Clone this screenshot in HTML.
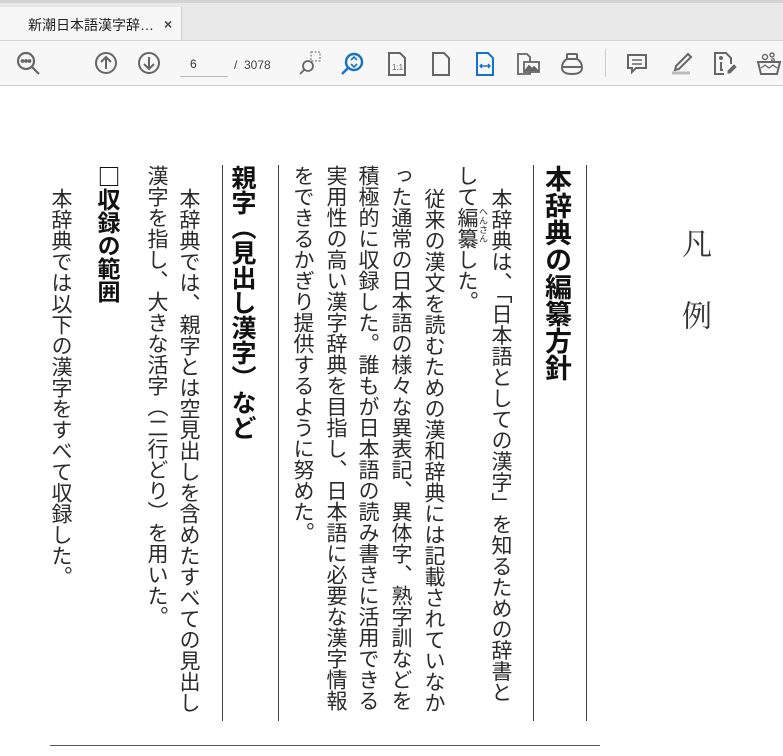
<!DOCTYPE html>
<html><head><meta charset="utf-8"><style>
*{margin:0;padding:0;box-sizing:border-box}
body{width:783px;height:756px;overflow:hidden;background:#fff;position:relative;font-family:"Liberation Sans","Noto Sans CJK JP",sans-serif}
.tabbar{position:absolute;left:0;top:0;width:783px;height:40px;background:#e8e8e8;border-top:3px solid #d4d4d4}
.tab{position:absolute;left:0;top:4px;width:182px;height:36px;background:#f6f6f6;border-right:1px solid #cfcfcf;font-size:14px;color:#222;padding:8px 0 0 28px;white-space:nowrap}
.tab .x{position:absolute;left:164px;top:9px;font-size:14px;color:#444;font-weight:bold}
.tool{position:absolute;left:0;top:40px;width:783px;height:46px;background:#f7f7f7;border-top:1px solid #d6d6d6;border-bottom:1px solid #cfcfcf}
.ic{position:absolute;top:10px}
.pg{position:absolute;left:180px;top:16px;width:48px;height:20px;border-bottom:1px solid #bbb;font-size:12px;color:#333;padding-left:10px}
.tot{position:absolute;left:234px;top:17px;font-size:12px;color:#444}
.sep{position:absolute;left:605px;top:8px;width:1px;height:28px;background:#ccc}
.col{position:absolute;top:165px;writing-mode:vertical-rl;font-family:"Noto Sans CJK JP",sans-serif;font-size:21px;line-height:22px;color:#2a2a2a;white-space:nowrap;font-weight:400}
.h{font-weight:700;color:#111}
.vl{position:absolute;top:165px;width:1px;height:556px;background:#444}
</style></head><body>
<div class="tabbar"><div class="tab">新潮日本語漢字辞…<span class="x">×</span></div></div>
<div class="tool">
<svg class="ic" style="left:16px" width="26" height="26" viewBox="0 0 26 26" fill="none" stroke="#666" stroke-width="2.2"><circle cx="10" cy="10" r="8"/><path d="M16 16l7 7"/><circle cx="6.5" cy="10" r=".8" fill="#666"/><circle cx="10" cy="10" r=".8" fill="#666"/><circle cx="13.5" cy="10" r=".8" fill="#666"/></svg>
<svg class="ic" style="left:94px" width="24" height="24" viewBox="0 0 24 24" fill="none" stroke="#666" stroke-width="2"><circle cx="12" cy="12" r="10"/><path d="M12 18V6M7 11l5-5 5 5"/></svg>
<svg class="ic" style="left:137px" width="24" height="24" viewBox="0 0 24 24" fill="none" stroke="#666" stroke-width="2"><circle cx="12" cy="12" r="10"/><path d="M12 6v12M7 13l5 5 5-5"/></svg>
<div class="pg">6</div><div class="tot">/ &nbsp;3078</div>
<svg class="ic" style="left:297px" width="26" height="26" viewBox="0 0 26 26" fill="none" stroke="#666" stroke-width="1.8"><rect x="14" y="1" width="9" height="9" stroke-dasharray="2 1.5" stroke-width="1"/><circle cx="11" cy="15" r="5"/><path d="M7 19l-4 4"/></svg>
<svg class="ic" style="left:340px" width="26" height="26" viewBox="0 0 26 26" fill="none" stroke="#1473c8" stroke-width="2.4"><circle cx="14" cy="11" r="8"/><path d="M8 17l-6 6"/><path d="M11 9l3-3 3 3M11 13l3 3 3-3" stroke-width="1.6"/></svg>
<svg class="ic" style="left:386px" width="22" height="26" viewBox="0 0 22 26" fill="none" stroke="#666" stroke-width="2"><path d="M3 2h11l5 5v17H3z"/><text x="6" y="19" font-size="8" fill="#666" stroke="none" font-family="Liberation Sans">1:1</text></svg>
<svg class="ic" style="left:430px" width="22" height="26" viewBox="0 0 22 26" fill="none" stroke="#666" stroke-width="2"><path d="M3 2h11l5 5v17H3z"/></svg>
<svg class="ic" style="left:474px" width="22" height="26" viewBox="0 0 22 26" fill="none" stroke="#1473c8" stroke-width="2"><path d="M3 2h11l5 5v17H3z"/><path d="M6 15h10M8 13l-2 2 2 2M14 13l2 2-2 2" stroke-width="1.4"/></svg>
<svg class="ic" style="left:515px" width="26" height="26" viewBox="0 0 26 26" fill="none" stroke="#666" stroke-width="1.8"><path d="M3 3h9l3 3v17H3z"/><rect x="9" y="11" width="15" height="10" fill="#f7f7f7"/><path d="M10 20l4-5 3 3 2-2 4 4" fill="#666"/></svg>
<svg class="ic" style="left:560px" width="24" height="26" viewBox="0 0 24 26" fill="none" stroke="#666" stroke-width="2"><rect x="7" y="3" width="10" height="5" rx="1"/><path d="M7 8c-4 2-5 6-5 9 0 4 4 6 10 6s10-2 10-6c0-3-1-7-5-9"/><path d="M3 16h18"/></svg>
<div class="sep"></div>
<svg class="ic" style="left:625px" width="24" height="26" viewBox="0 0 24 26" fill="none" stroke="#666" stroke-width="2"><path d="M3 4h18v13H11l-4 4v-4H3z"/><path d="M7 9h10M7 13h10" stroke-width="1.5"/></svg>
<svg class="ic" style="left:668px" width="26" height="26" viewBox="0 0 26 26" fill="none" stroke="#666" stroke-width="2"><path d="M20 3l3 3-12 12-4 1 1-4z"/><path d="M4 22h18" stroke="#bbb" stroke-width="3"/></svg>
<svg class="ic" style="left:712px" width="26" height="26" viewBox="0 0 26 26" fill="none" stroke="#666" stroke-width="2"><path d="M12 23H3V2h11l5 5v6"/><path d="M9 11v8M8 19h3" stroke-width="2"/><circle cx="9" cy="7" r="1" fill="#666"/><path d="M22 14l2 2-6 6h-2v-2z" fill="#666" stroke-width="1"/></svg>
<svg class="ic" style="left:756px" width="26" height="26" viewBox="0 0 26 26" fill="none" stroke="#666" stroke-width="2"><path d="M2 11h22l-3 12H5z"/><circle cx="9" cy="6" r="2.5" stroke-width="1.4"/><circle cx="16" cy="4" r="2" stroke-width="1.4"/><circle cx="17" cy="9" r="1.3" stroke-width="1.2"/><path d="M5 17l4-3 4 3 4-3 4 3" stroke-width="1.2"/></svg>
</div>

<div class="col" style="left:682px;top:228px;font-family:'Noto Serif CJK SC',serif;font-size:30px;line-height:30px;letter-spacing:42px;color:#333">凡例</div>

<div class="vl" style="left:586px"></div>
<div class="col h" style="left:545px;font-size:27px;line-height:27px">本辞典の編纂方針</div>
<div class="vl" style="left:533px"></div>
<div class="col" style="left:491px;top:188px">本辞典は、「日本語としての漢字」を知るための辞書と</div>
<div class="col" style="left:457px">して編纂した。</div>
<div class="col" style="left:479px;top:207px;font-size:9px;line-height:9px">へんさん</div>
<div class="col" style="left:424px;top:188px">従来の漢文を読むための漢和辞典には記載されていなか</div>
<div class="col" style="left:391px">った通常の日本語の様々な異表記、異体字、熟字訓などを</div>
<div class="col" style="left:358px">積極的に収録した。誰もが日本語の読み書きに活用できる</div>
<div class="col" style="left:326px">実用性の高い漢字辞典を目指し、日本語に必要な漢字情報</div>
<div class="col" style="left:293px">をできるかぎり提供するように努めた。</div>
<div class="vl" style="left:278px"></div>
<div class="col h" style="left:231px;font-size:25px;line-height:25px">親字（見出し漢字）など</div>
<div class="vl" style="left:222px"></div>
<div class="col" style="left:179px;top:188px">本辞典では、親字とは空見出しを含めたすべての見出し</div>
<div class="col" style="left:147px">漢字を指し、大きな活字（二行どり）を用いた。</div>
<div class="col h" style="left:97px;font-size:23px;line-height:23px">□収録の範囲</div>
<div class="col" style="left:51px;top:188px">本辞典では以下の漢字をすべて収録した。</div>
<div style="position:absolute;left:50px;top:745px;width:550px;height:1px;background:#555"></div>
</body></html>
